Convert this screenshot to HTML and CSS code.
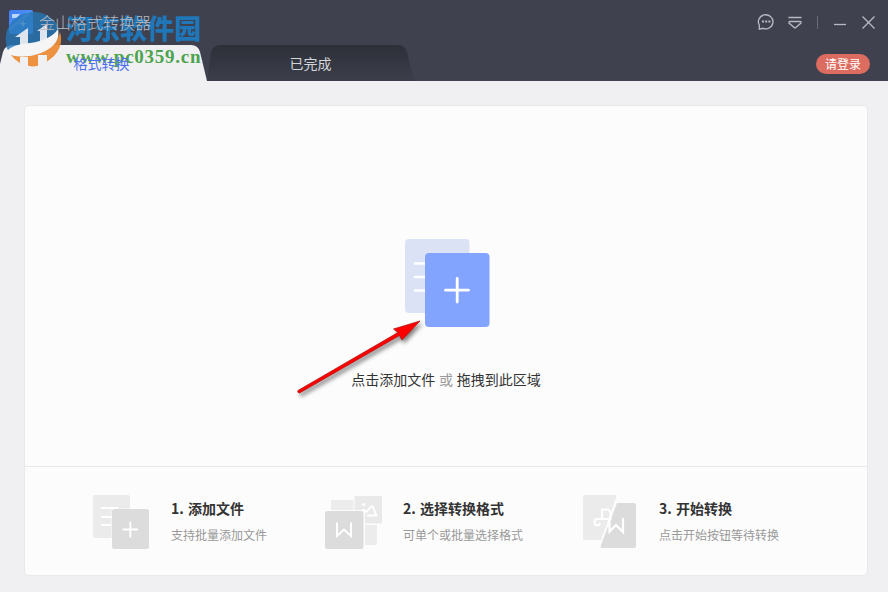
FILE: index.html
```html
<!DOCTYPE html>
<html lang="zh-CN">
<head>
  <meta charset="UTF-8" />
  <meta name="viewport" content="width=device-width, initial-scale=1.0"/>
  <title>金山格式转换器</title>
  <link rel="stylesheet" href="styles.css">
</head>
<body>

  <header class="header">
    <div class="titlebar">
      <div class="brand">
        <svg class="logo" width="24" height="24" viewBox="0 0 24 24">
          <defs>
            <linearGradient id="logoBg" x1="0" y1="0" x2="1" y2="1">
              <stop offset="0" stop-color="#3f7ff0"/>
              <stop offset="1" stop-color="#5b9cf8"/>
            </linearGradient>
          </defs>
          <rect width="24" height="24" rx="2" fill="url(#logoBg)"/>
          <path d="M3 4h8l-3 4H3z" fill="#b9d6ff"/>
          <path d="M0 20L20 3" stroke="#78aef9" stroke-width="3"/>
          <path d="M14 10l1 3 3 .5-3 1-1 3-1-3-3-1 3-.5z" fill="#fff"/>
        </svg>
        <span class="app-name">金山格式转换器</span>
      </div>
      <div class="window-tools">
        <svg width="18" height="18" viewBox="0 0 18 18">
          <path d="M2.3 16.2V12.2A7.3 7 0 1 1 6 15.3Z"/>
          <path class="dots" d="M5 8.5h2M8.2 8.5h2M11.4 8.5h2"/>
        </svg>
        <svg width="14" height="13" viewBox="0 0 14 13">
          <path d="M.5 1.5h13M2 5.500h10q1.500 0 1 1.500L7.800 11.400q-.8.700-1.600 0L1 7q-.5-1.500 1-1.500z"/>
        </svg>
        <i class="divider"></i>
        <svg width="12" height="14" viewBox="0 0 12 14"><path d="M0 9.500h12"/></svg>
        <svg class="close" width="13" height="13" viewBox="0 0 13 13"><path d="M.5.5l12 12M12.500.5l-12 12"/></svg>
      </div>
    </div>

    <div class="tabs">
      <div class="tab active">
        <svg class="tab-bg" width="207" height="36" viewBox="0 0 207 36">
          <path d="M0 36V19L3 7Q5 0 13 0H191Q198 0 200 7L207 36z" fill="#f0f0f3"/>
        </svg>
        <span>格式转换</span>
      </div>
      <div class="tab done">
        <svg class="tab-bg" width="207" height="36" viewBox="0 0 207 36">
          <defs>
            <linearGradient id="tabBg" x1="0" y1="0" x2="0" y2="1">
              <stop offset="0" stop-color="#2d3039"/>
              <stop offset="1" stop-color="#3c3f4b"/>
            </linearGradient>
          </defs>
          <path d="M0 36L4 7Q6 0 14 0H191Q198 0 200 7L207 36z" fill="url(#tabBg)"/>
        </svg>
        <span>已完成</span>
      </div>
      <button class="login">请登录</button>
    </div>
  </header>

  <main class="panel">
    <div class="drop-area">
      <svg class="add-icon" width="85" height="89" viewBox="0 0 85 89">
        <rect width="64.500" height="74" rx="4" fill="#dbe2f6"/>
        <path d="M10 24.500h14M10 38h14M10 51.500h14" stroke="#fff" stroke-width="2.600" stroke-linecap="round"/>
        <rect x="20" y="14" width="64.500" height="74" rx="4" fill="#82a4ff"/>
        <path d="M40.500 51.200h23M52.200 39.500v23.500" stroke="#fff" stroke-width="2.800" stroke-linecap="round"/>
      </svg>
      <p class="drop-text">点击添加文件 <em>或</em> 拖拽到此区域</p>
    </div>

    <div class="steps">
      <div class="step step-add">
        <svg width="58" height="54" viewBox="0 0 58 54">
          <rect width="37" height="43" rx="2" fill="#ebebeb"/>
          <path d="M8 13h17M8 22h12M8 30h10" stroke="#fff" stroke-width="1.800"/>
          <rect x="18.500" y="13.500" width="39" height="41" rx="2.500" fill="#fcfcfc"/>
          <rect x="19" y="14" width="37" height="40" rx="2.500" fill="#dcdcdc"/>
          <path d="M29.500 34.500h15.500M37.300 26.500v16" stroke="#fff" stroke-width="1.800"/>
        </svg>
        <div class="step-text">
          <h3>1. 添加文件</h3>
          <p>支持批量添加文件</p>
        </div>
      </div>
      <div class="step step-format">
        <svg width="58" height="54" viewBox="0 0 58 54">
          <rect x="6" y="5" width="24" height="26" rx="1" fill="#ececec"/>
          <rect x="30" y="26" width="22" height="24" rx="1" fill="#ececec"/>
          <rect x="28.500" y="1" width="28.500" height="29" fill="#fcfcfc"/>
          <rect x="29.500" y="1" width="27.500" height="27.500" rx="1" fill="#e9e9e9"/>
          <circle cx="38.500" cy="9.500" r="1.600" fill="#fff"/>
          <path d="M36.500 16q2.500-2.500 5 1l4-5q1.500-1.500 2.500 0l3.500 8.500H42" fill="none" stroke="#fff" stroke-width="1.800"/>
          <rect x="-1" y="15" width="41" height="40" rx="2.500" fill="#fcfcfc"/>
          <rect y="16" width="38.500" height="38" rx="2.500" fill="#dcdcdc"/>
          <path d="M12 27.500V41l7-6.500 7 6.500V27.500" fill="none" stroke="#fff" stroke-width="2"/>
        </svg>
        <div class="step-text">
          <h3>2. 选择转换格式</h3>
          <p>可单个或批量选择格式</p>
        </div>
      </div>
      <div class="step step-start">
        <svg width="54" height="54" viewBox="0 0 54 54">
          <path d="M2 0H31Q34 0 33 3L18 45H2Q0 45 0 43V2Q0 0 2 0z" fill="#ebebeb"/>
          <path d="M34 8H51Q53 8 53 10V51Q53 53 51 53H19Q17 53 18 50z" fill="#dcdcdc"/>
          <path d="M18 14.500h6q3.500.5 3.500 4.500v5H14q-2.500 0-2.500 3.200t2.500 3.200 2.800-2.500M19 14.500v9" fill="none" stroke="#fff" stroke-width="2.200"/>
          <path d="M26.500 24v12.500l6.500-6.500 7 7V23" fill="none" stroke="#fff" stroke-width="2.200"/>
        </svg>
        <div class="step-text">
          <h3>3. 开始转换</h3>
          <p>点击开始按钮等待转换</p>
        </div>
      </div>
    </div>
  </main>

  <!-- arrow pointing at the add button -->
  <svg class="arrow" width="140" height="90" viewBox="0 0 140 90">
    <path d="M8 76.500L108 18.500L103.500 15L130 7L112 26L109.500 21.500L9.500 79Q7 78.500 8 76.500z" fill="#f00" stroke="#b41414" stroke-width=".8"/>
  </svg>

  <!-- site watermark -->
  <div class="watermark">
    <svg width="58" height="58" viewBox="0 0 58 58">
      <path d="M1 33A28 27 0 0 1 52 14L54 20Q46 33 27 36Q10 38 4 42Q1 38 1 33z" fill="#2577b8" opacity=".8"/>
      <path d="M55 22Q59 35 49 46Q37 57 27 56.500Q13 55 6 45Q20 49 36 43Q52 36 55 22z" fill="#eb8c36" opacity=".95"/>
      <path d="M15 47h8v11h-8zM33 45h9v13h-9z" fill="#f0f0f3"/>
      <path d="M10 27L23 18V39H15V27zM32 21L42 14V34H35V21z" fill="#dfe5ee"/>
      <path d="M2 41Q8 34 25 33Q46 30 53 19Q56 33 40 41Q21 49 7 45Q3 44 2 41z" fill="#f5f5f6"/>
    </svg>
    <div class="mark-text">
      <b class="mark-name">河东软件园</b>
      <b class="mark-url">www.pc0359.cn</b>
    </div>
  </div>

</body>
</html>
```

FILE: styles.css
```css
* {
  box-sizing: border-box;
}
body {
  margin: 0;
  height: 592px;
  overflow: hidden;
  background: #f0f0f3;
  color: #333;
  font-family: "Noto Sans CJK SC", sans-serif;
}
.header {
  height: 81px;
  background: #3f424e;
}
.titlebar {
  display: flex;
  justify-content: space-between;
  height: 45px;
  padding: 0 13px 0 9px;
}
.brand {
  display: flex;
  align-items: center;
  height: 44px;
}
.app-name {
  position: relative;
  z-index: 2;
  margin-left: 6px;
  color: #b9bbc2;
  font-size: 16px;
  font-weight: 300;
}
.window-tools {
  display: flex;
  align-items: center;
  height: 44px;
}
.window-tools svg {
  fill: none;
  stroke: #b8bac3;
  stroke-width: 1.3;
}
.window-tools svg + svg {
  margin-left: 13px;
}
.window-tools svg.close {
  margin-left: 16px;
}
.window-tools .dots {
  stroke-width: 1.8;
}
.divider {
  width: 1px;
  height: 13px;
  margin: 0 16px 0 15px;
  background: #6a6d78;
}
.tabs {
  display: flex;
  height: 36px;
}
.tab {
  position: relative;
  width: 207px;
  padding-top: 8px;
  text-align: center;
  font-size: 14px;
  line-height: 20px;
}
.tab-bg {
  position: absolute;
  top: 0;
  left: 0;
}
.tab span {
  position: relative;
  z-index: 2;
}
.active {
  color: #4c6ff0;
}
.active span {
  left: -2px;
}
.done {
  color: #d4d6dc;
}
.login {
  width: 54px;
  height: 20px;
  margin: 9px 18px 0 auto;
  padding: 0;
  border: none;
  border-radius: 10px;
  background: #dc6c60;
  color: #fff;
  font: 12px/20px "Noto Sans CJK SC", sans-serif;
}
.panel {
  display: flex;
  flex-direction: column;
  width: 844px;
  height: 471px;
  margin: 24px 0 0 24px;
  border: 1px solid #e9e9ec;
  border-radius: 5px;
  background: #fcfcfc;
}
.drop-area {
  display: flex;
  flex-direction: column;
  align-items: center;
  height: 361px;
  padding-top: 133px;
  border-bottom: 1px solid #e8e8ea;
}
.add-icon {
  margin-left: 2px;
}
.drop-text {
  margin: 41px 0 0;
  font-size: 14px;
  line-height: 20px;
  word-spacing: 0.5px;
}
.drop-text em {
  color: #999;
  font-style: normal;
}
.steps {
  display: flex;
  padding: 28px 0 0 68px;
}
.step {
  display: flex;
}
.step-add {
  width: 232px;
}
.step-format {
  width: 258px;
}
.step-text {
  margin-left: 20px;
}
.step-start .step-text {
  margin-left: 22px;
}
.step h3 {
  margin: 3px 0 0;
  font-size: 14px;
  line-height: 20px;
  word-spacing: 1px;
}
.step p {
  margin: 8px 0 0;
  color: #999;
  font-size: 12px;
  line-height: 18px;
}
.arrow {
  position: absolute;
  left: 290px;
  top: 314px;
  filter: drop-shadow(2px 3px 2px rgba(0, 0, 0, 0.5));
}
.watermark {
  display: flex;
  position: absolute;
  left: 5px;
  top: 10px;
  z-index: 1;
}
.mark-text {
  display: flex;
  flex-direction: column;
  margin: 2px 0 0 3px;
}
.mark-name {
  color: #1c7cc4;
  font-size: 27px;
  font-weight: 900;
  line-height: 32px;
  opacity: 0.9;
}
.mark-url {
  color: #4da44d;
  font: bold 19px/26px "Liberation Serif", serif;
  letter-spacing: 0.75px;
}
```
